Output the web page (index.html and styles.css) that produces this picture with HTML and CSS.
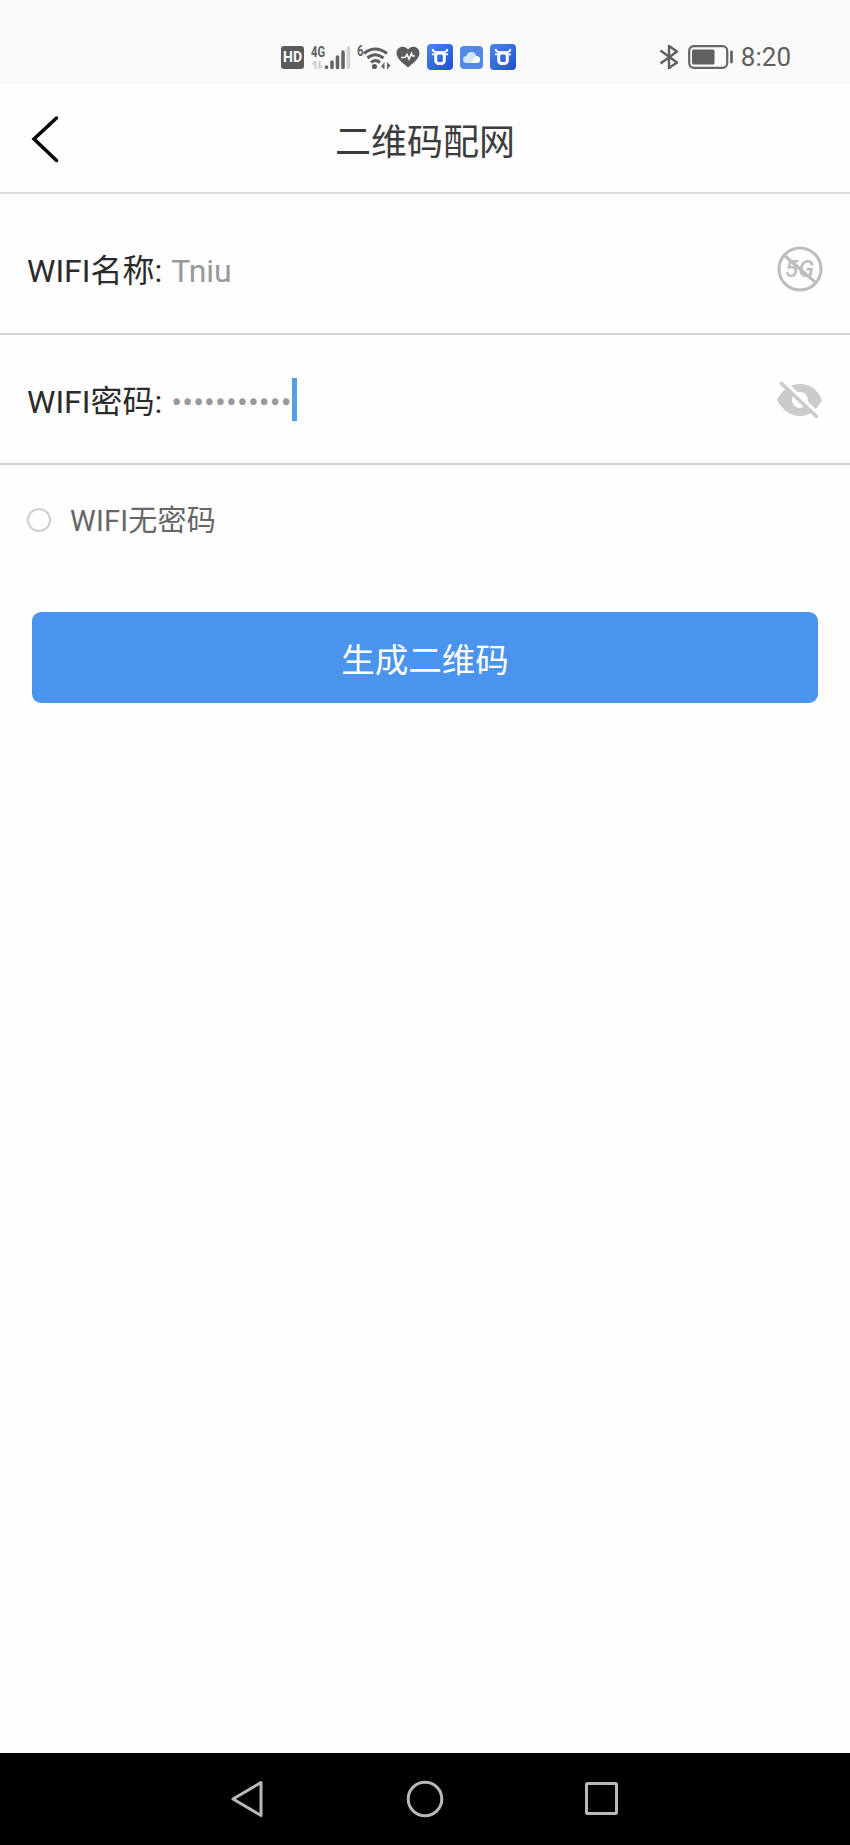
FILE: index.html
```
<!DOCTYPE html>
<html lang="zh-CN">
<head>
  <meta charset="UTF-8">
  <meta name="viewport" content="width=device-width, initial-scale=1.0">
  <title>二维码配网</title>
  <link rel="stylesheet" href="styles.css">
</head>
<body>
  <div class="phone">
    <div class="status-bar">
      <div class="status-icons">
        <div class="hd">HD</div>
        <svg class="signal" width="40" height="26" viewBox="0 0 40 26">
          <text class="net-text" x="0" y="12.500" textLength="14" lengthAdjust="spacingAndGlyphs">4G</text>
          <path d="M4.500 17v8M1.500 20.500l3-3M8.500 25v-8M8.500 24.500l3-3" stroke="#cfcfcf" stroke-width="2" fill="none"/>
          <path d="M15.500 23v.5M21 18v5.500M26.500 13v10.500M32 8v15.500" stroke="#666" stroke-width="3.600" stroke-linecap="round"/>
          <path d="M37.500 4v19.500" stroke="#d2d2d2" stroke-width="3.600" stroke-linecap="round"/>
        </svg>
        <svg class="wifi" width="34" height="26" viewBox="0 0 34 26">
          <text class="net-text" x="0" y="12" textLength="6.500" lengthAdjust="spacingAndGlyphs">6</text>
          <g stroke="#5d5d5d" stroke-width="3" fill="none">
            <path d="M7 9.500Q18 .5 30 9.500"/>
            <path d="M10.500 14Q18 7.500 26.500 14"/>
            <path d="M14 18.500Q18 14.500 23 18.500"/>
          </g>
          <circle cx="17.500" cy="22.500" r="2.600" fill="#5d5d5d"/>
          <path d="M27.500 18v7.500L24 22.500zM30 25.500v-7.500l3.500 3.500z" fill="#666"/>
        </svg>
        <svg class="heart" width="24" height="22" viewBox="0 0 24 22">
          <path d="M12 21.500C8 18 .5 13 .5 7C.5 3 3.500.700 6.500.700C9 .700 11 2 12 3.500C13 2 15 .700 17.500.700C20.500.700 23.500 3 23.500 7C23.500 13 16 18 12 21.500Z" fill="#5b5b5b"/>
          <path d="M5 11.500h4l2-3 2 4.500 2.500-5.500 1 2.500h2.500" stroke="#fafafa" stroke-width="1.700" fill="none"/>
        </svg>
        <svg class="app" width="26" height="26" viewBox="0 0 26 26">
          <defs>
            <linearGradient id="blue" x1="0" y1="0" x2="1" y2="1">
              <stop offset="0" stop-color="#4b87e6"/>
              <stop offset="1" stop-color="#1f4fd8"/>
            </linearGradient>
            <g id="bull" stroke="#fff" fill="none">
              <path d="M5.500 5Q6 8 9 8.200H17Q20 8 20.500 5" stroke-width="1.800"/>
              <path d="M5 10.300H9M17 10.300H21" stroke-width="1.800"/>
              <rect x="8.700" y="9" width="8.600" height="10.500" rx="3" stroke-width="3"/>
            </g>
          </defs>
          <rect width="26" height="26" rx="4" fill="url(#blue)"/>
          <use href="#bull"/>
        </svg>
        <svg class="app-cloud" width="23" height="23" viewBox="0 0 23 23">
          <rect width="23" height="23" rx="4" fill="#5289e4"/>
          <path d="M7 17Q3 17 3 13.500T6.500 10Q7.500 6 11.500 6T16 10Q20 10 20 13.500T16.500 17Z" fill="#d7e7ff"/>
          <path d="M11 17L16 10Q20 10 20 13.500T16.500 17Z" fill="#fff"/>
        </svg>
        <svg class="app" width="26" height="26" viewBox="0 0 26 26">
          <rect width="26" height="26" rx="4" fill="url(#blue)"/>
          <use href="#bull"/>
        </svg>
      </div>
      <div class="status-right">
        <svg width="20" height="26" viewBox="0 0 20 26">
          <path d="M1.500 6.500L18 18.500L10 24V2L18 7.500L1.500 19.500" stroke="#5e5e5e" stroke-width="2.400" fill="none" stroke-linejoin="round"/>
        </svg>
        <svg class="battery" width="46" height="24" viewBox="0 0 46 24">
          <rect x="1.200" y="1.200" width="38" height="21.600" rx="4.500" stroke="#666" stroke-width="2.200" fill="none"/>
          <rect x="4" y="4.500" width="22.500" height="15" rx="1.500" fill="#606060"/>
          <path d="M43.500 7v10" stroke="#666" stroke-width="2.800" stroke-linecap="round"/>
        </svg>
        <span class="time">8:20</span>
      </div>
    </div>

    <div class="header">
      <svg class="back" width="30" height="48" viewBox="0 0 30 48">
        <path d="M25.500 3L3 24L25.500 45.500" stroke="#000" stroke-width="3.500" fill="none" stroke-linecap="round"/>
      </svg>
      <h1>二维码配网</h1>
    </div>

    <div class="row row-name">
      <label>WIFI名称:</label>
      <span class="value">Tniu</span>
      <svg class="row-icon" width="46" height="46" viewBox="0 0 46 46">
        <circle cx="23" cy="23" r="21" stroke="#bdbdbd" stroke-width="3" fill="none"/>
        <text class="five-g" x="8" y="31">5G</text>
        <path d="M8 10L38 36" stroke="#bdbdbd" stroke-width="3"/>
      </svg>
    </div>

    <div class="row row-pass">
      <label>WIFI密码:</label>
      <span class="value dots">•••••••••••</span>
      <span class="cursor"></span>
      <svg class="row-icon" width="46" height="40" viewBox="0 0 46 40">
        <path d="M0 20Q8 4 23 4T45 20Q37 36 23 36T0 20Z" fill="#cbcbcb"/>
        <circle cx="23" cy="20" r="8" fill="#fefefe"/>
        <path d="M6.500 1L42.500 35" stroke="#fefefe" stroke-width="3.500"/>
        <path d="M4.500 3.500L39.500 36.500" stroke="#cbcbcb" stroke-width="3.500" stroke-linecap="round"/>
      </svg>
    </div>

    <div class="no-pass">
      <span class="radio"></span>
      <span>WIFI无密码</span>
    </div>

    <button class="submit">生成二维码</button>

    <div class="nav-bar">
      <svg width="34" height="38" viewBox="0 0 34 38">
        <path d="M31 2.500V35.500L3 19Z" stroke="#b8b8b8" stroke-width="3" fill="none" stroke-linejoin="round"/>
      </svg>
      <svg width="38" height="38" viewBox="0 0 38 38">
        <circle cx="19" cy="19" r="16.800" stroke="#b8b8b8" stroke-width="3" fill="none"/>
      </svg>
      <svg width="34" height="34" viewBox="0 0 34 34">
        <rect x="1.500" y="1.500" width="30" height="30" rx="1" stroke="#b8b8b8" stroke-width="3" fill="none"/>
      </svg>
    </div>
  </div>
</body>
</html>
```
FILE: styles.css
```
* {
  margin: 0;
  padding: 0;
  box-sizing: border-box;
}
body {
  font-family: Roboto, "Noto Sans CJK SC", sans-serif;
  background: #fefefe;
}
svg {
  display: block;
  flex: none;
}
.phone {
  height: 1845px;
  display: flex;
  flex-direction: column;
}

/* status bar */
.status-bar {
  height: 84px;
  padding: 30px 59px 0 281px;
  background: #fafafa;
  display: flex;
  align-items: center;
  justify-content: space-between;
}
.status-icons, .status-right {
  display: flex;
  align-items: center;
}
.hd {
  width: 23px;
  height: 23px;
  border-radius: 3px;
  background: #5b5b5b;
  color: #fff;
  font-size: 14px;
  font-weight: 700;
  line-height: 23px;
  text-align: center;
}
.signal {
  margin-left: 7px;
}
.wifi {
  margin-left: 6px;
}
.net-text {
  font-size: 14.5px;
  font-weight: 700;
  fill: #5e5e5e;
}
.heart {
  margin-left: 5px;
}
.app {
  margin-left: 7px;
}
.app-cloud {
  margin-left: 7px;
}
.battery {
  margin-left: 9px;
}
.time {
  margin-left: 7px;
  font-size: 26px;
  line-height: 26px;
  color: #5e5e5e;
}

/* title */
.header {
  height: 110px;
  padding: 2px 31px 0;
  border-bottom: 2px solid #dedede;
  display: grid;
  grid-template-columns: 30px 1fr 30px;
  align-items: center;
}
.header h1 {
  padding-top: 7px;
  font-size: 36px;
  line-height: 50px;
  font-weight: 400;
  color: #3c3c3c;
  text-align: center;
}

/* form */
.row {
  padding: 0 27px 0 27px;
  border-bottom: 2px solid #d2d2d2;
  display: flex;
  align-items: center;
  font-size: 32px;
  line-height: 44px;
  color: #2b2b2b;
}
.row-name {
  height: 141px;
  padding-top: 11px;
}
.row-name label, .row-name .value {
  padding-top: 4px;
}
.row-pass {
  height: 130px;
  padding-top: 1px;
}
.row-pass label, .dots {
  padding-top: 5px;
}
.value {
  margin-left: 9px;
  color: #999;
}
.dots {
  letter-spacing: 0.15px;
}
.cursor {
  width: 5px;
  height: 43px;
  background: #559fe0;
}
.row-icon {
  margin-left: auto;
}
.five-g {
  font-size: 24px;
  font-style: italic;
  font-weight: 500;
  fill: #bdbdbd;
}
.no-pass {
  padding: 34px 27px 0;
  display: flex;
  align-items: center;
  font-size: 29px;
  line-height: 44px;
  letter-spacing: 0.2px;
  color: #666;
}
.radio {
  width: 24px;
  height: 24px;
  margin: -2px 19px 0 0;
  border: 2px solid #cfcfcf;
  border-radius: 50%;
}
.submit {
  height: 91px;
  margin: 69px 32px 0;
  border: none;
  border-radius: 9px;
  background: #4a94ee;
  color: #fff;
  font-family: inherit;
  font-size: 33.5px;
}

/* system navigation */
.nav-bar {
  height: 92px;
  margin-top: auto;
  padding: 0 231px 0 230px;
  background: #000;
  display: flex;
  align-items: center;
  justify-content: space-between;
}
```
